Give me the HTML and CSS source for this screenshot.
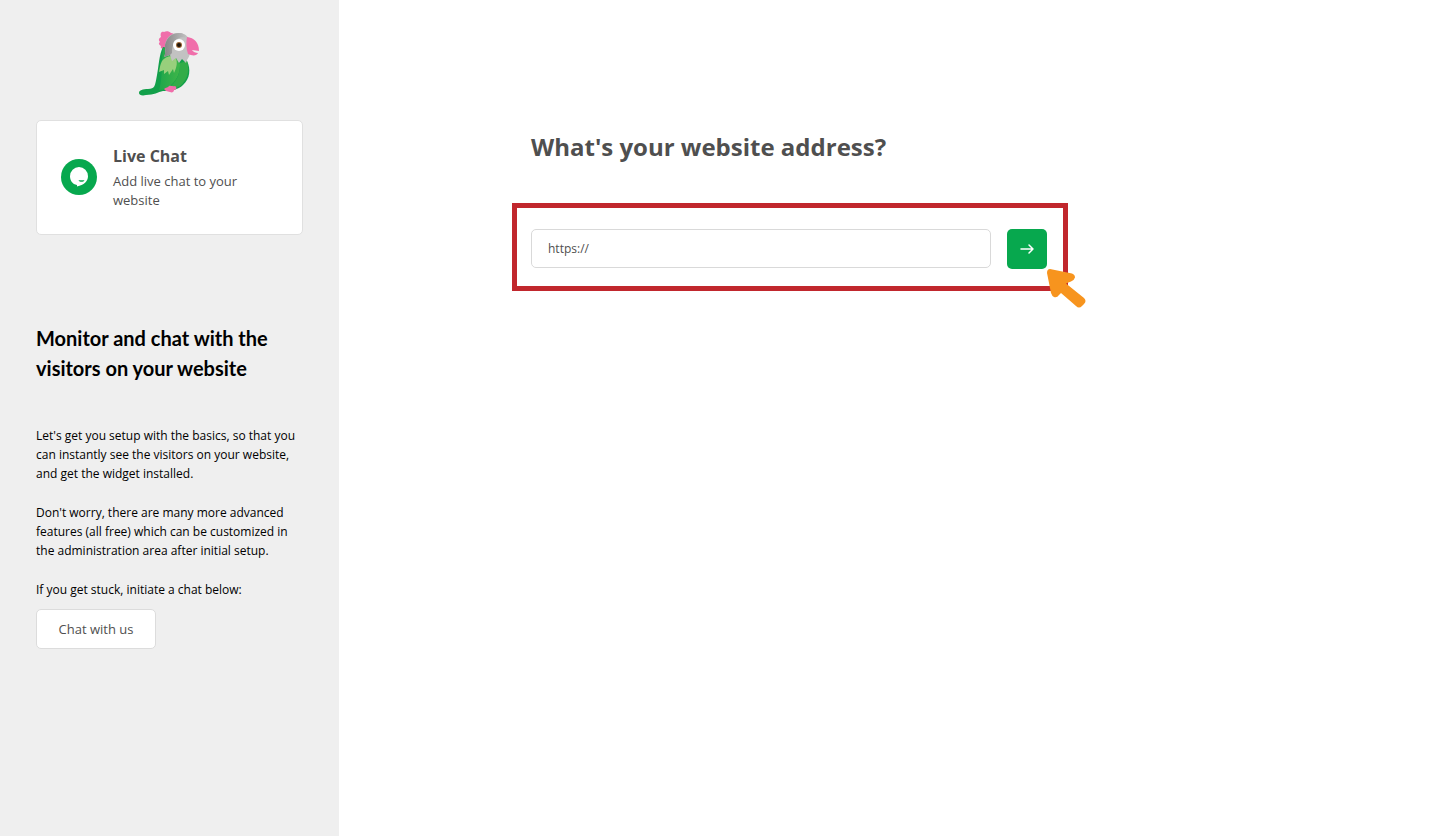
FILE: index.html
```html
<!DOCTYPE html>
<html lang="en">
<head>
<meta charset="utf-8">
<meta name="viewport" content="width=device-width, initial-scale=1">
<title>Live chat setup</title>
<link rel="stylesheet" href="styles.css">
</head>
<body>
<div class="layout">
  <aside class="sidebar">
    <svg class="logo" viewBox="0 0 64 68" width="64" height="68" role="img" aria-label="Parrot logo">
      <defs>
        <linearGradient id="head" x1="0" x2="1"><stop offset="0" stop-color="#858585"/><stop offset="1" stop-color="#c4c4c4"/></linearGradient>
        <linearGradient id="back" x1="0" x2="1"><stop offset="0" stop-color="#1fa64b"/><stop offset="1" stop-color="#3fb549"/></linearGradient>
      </defs>
      <path fill="#f06eaa" d="M26 19c-2 0-4-1-3-3-2-1-3-3-1-4-2-2-1-4 1-5-1-3 0-6 3-5 2-1 5-1 7 1 2 0 3 1 4 2L29 17z"/>
      <path fill="#12a04a" d="M25 17c6 0 19 9 24 14 4 8 3 18-4 24-5 5-12 6-20 6-5 1-9 4-17 4-4 1-7 0-7-2 0-3 4-4 9-4 7 0 7-3 9-14 2-10 2-20 6-28z"/>
      <path fill="url(#back)" d="M25 18c5 0 12 6 17 16 0 8-2 15-9 21-3 3-7 5-12 5 4-12 2-26 4-42z"/>
      <path fill="#32ac48" d="M42 33l7-2c3 11 0 19-7 25-4 2-8 2-9 0 7-7 9-13 9-23z"/>
      <path fill="#98cf7c" d="M24 31c3-4 8-6 13-4 3 4 2 10-1 16l-1-4-4 6-1-4-4 3v-4l-5 2c1-5 1-7 3-11z"/>
      <path fill="#f06eaa" d="M26 59c2-2 4-1 5-3 2-1 4 1 6 0 2 1 2 4-1 4 0 2-2 3-4 2-2 0-2-1-4-1z"/>
      <path fill="#c2c2c2" d="M27 16C28 7 33 3 41 3c7 0 11 5 12 12 0 6-1 11-4 15l-1 3-4-4-3 4-3-5-4 3-2-6-6 2c2-4 1-7 1-11z"/>
      <path fill="url(#head)" d="M27 15C29 7 34 3 41 3c4 0 7 2 9 5-11-3-16 4-16 15l-2 2-6 2c2-4 1-8 1-12z"/>
      <path fill="#f06eaa" d="M49 7c7 1 12 5 12 14-2 0-5-1-7-1 1 2 4 3 6 3-1 3-6 3-10 1-2-6-2-11-1-17z"/>
      <circle cx="41" cy="15" r="6" fill="#fff"/><circle cx="41" cy="15" r="3" fill="#9a6532"/><circle cx="41" cy="15" r="2" fill="#20160e"/>
    </svg>
    <section class="product">
      <svg class="product-icon" viewBox="0 0 36 36" width="36" height="36" aria-hidden="true">
        <circle cx="18" cy="18" r="18" fill="#07a84e"/>
        <path fill="#fff" d="M18 8a9.300 9.300 0 0 1 9 9.300c0 5-4 8.700-11 10.200V26C11.500 25.500 9 21.500 9 17.300A9.300 9.300 0 0 1 18 8z"/>
        <path fill="#07a84e" d="M17.500 21.200h6c-1 2-5 2-6 0z"/>
      </svg>
      <div>
        <h2 class="product-name">Live Chat</h2>
        <p class="product-text">Add live chat to your website</p>
      </div>
    </section>
    <h3 class="intro-title">Monitor and chat with the visitors on your website</h3>
    <div class="intro">
      <p>Let's get you setup with the basics, so that you can instantly see the visitors on your website, and get the widget installed.</p>
      <p>Don't worry, there are many more advanced features (all free) which can be customized in the administration area after initial setup.</p>
      <p>If you get stuck, initiate a chat below:</p>
    </div>
    <button class="chat-button" type="button">Chat with us</button>
  </aside>
  <main class="main">
    <div class="content">
      <h1 class="title"><label for="site">What's your website address?</label></h1>
      <form class="address">
        <input class="address-input" id="site" type="text" value="https://">
        <button class="next" type="button" aria-label="Next">
          <svg viewBox="0 0 16 12" width="16" height="12" aria-hidden="true"><path d="M2 6h12M10 2l4 4-4 4" fill="none" stroke="#fff" stroke-width="1.500" stroke-linecap="round" stroke-linejoin="round"/></svg>
        </button>
        <svg class="pointer" viewBox="0 0 40 40" width="40" height="40" aria-hidden="true"><path fill="#f7941e" d="M3 0L25 4.500q3 1 3 4-1 3-4 4l-5 2L37 29q3 3 0 6l-2 2q-3 3-6 0L14 24l-2 2q-2 3-5 2-2-1-3-4L0 4Q0 0 3 0z"/></svg>
      </form>
    </div>
  </main>
</div>
</body>
</html>
```
FILE: styles.css
```css
* { box-sizing: border-box; }
body { margin: 0; background: #fff; color: #4f4f4f; font-family: "Open Sans", sans-serif; }
h1, h2, h3, p { margin: 0; }
button, input { font-family: inherit; }
.layout { display: flex; min-height: 100vh; }
.sidebar { flex: 0 0 339px; display: flex; flex-direction: column; align-items: flex-start; padding: 30px 36px; background: #efefef; }
.logo { align-self: center; }
.product { align-self: stretch; display: flex; align-items: center; gap: 16px; margin-top: 22px; padding: 23px 24px 24px; background: #fff; border: 1px solid #e0e0e0; border-radius: 5px; }
.product-icon { flex: none; }
.product-name { font-size: 16px; line-height: 24px; }
.product-text { margin-top: 4px; font-size: 13px; line-height: 19px; }
.intro-title { margin-top: 88px; color: #000; font: bold 20px/30px Lato, sans-serif; }
.intro { display: flex; flex-direction: column; gap: 20px; margin-top: 43px; color: #000; font-size: 12px; line-height: 19px; }
.chat-button { margin-top: 10px; width: 120px; height: 40px; padding: 0; background: #fff; border: 1px solid #dcdcdc; border-radius: 5px; color: #4f4f4f; font-size: 13px; }
.main { flex: 1; min-width: 0; padding-top: 130px; }
.content { max-width: 717px; margin: 0 auto; }
.title { font-size: 24px; line-height: 34px; }
.address { position: relative; display: flex; gap: 16px; width: 72%; min-width: 300px; margin-top: 65px; }
.address::before { content: ""; position: absolute; inset: -26px -21px -22px -19px; border: 5px solid #c1272d; pointer-events: none; }
.address-input { flex: 1; min-width: 0; height: 39px; padding: 0 16px; background: #fff; border: 1px solid #d9d9d9; border-radius: 5px; color: #4f4f4f; font-size: 12px; }
.next { display: flex; align-items: center; justify-content: center; width: 40px; height: 40px; padding: 0; background: #07a84e; border: 0; border-radius: 5px; }
.pointer { position: absolute; top: 40px; left: 100%; }
```
